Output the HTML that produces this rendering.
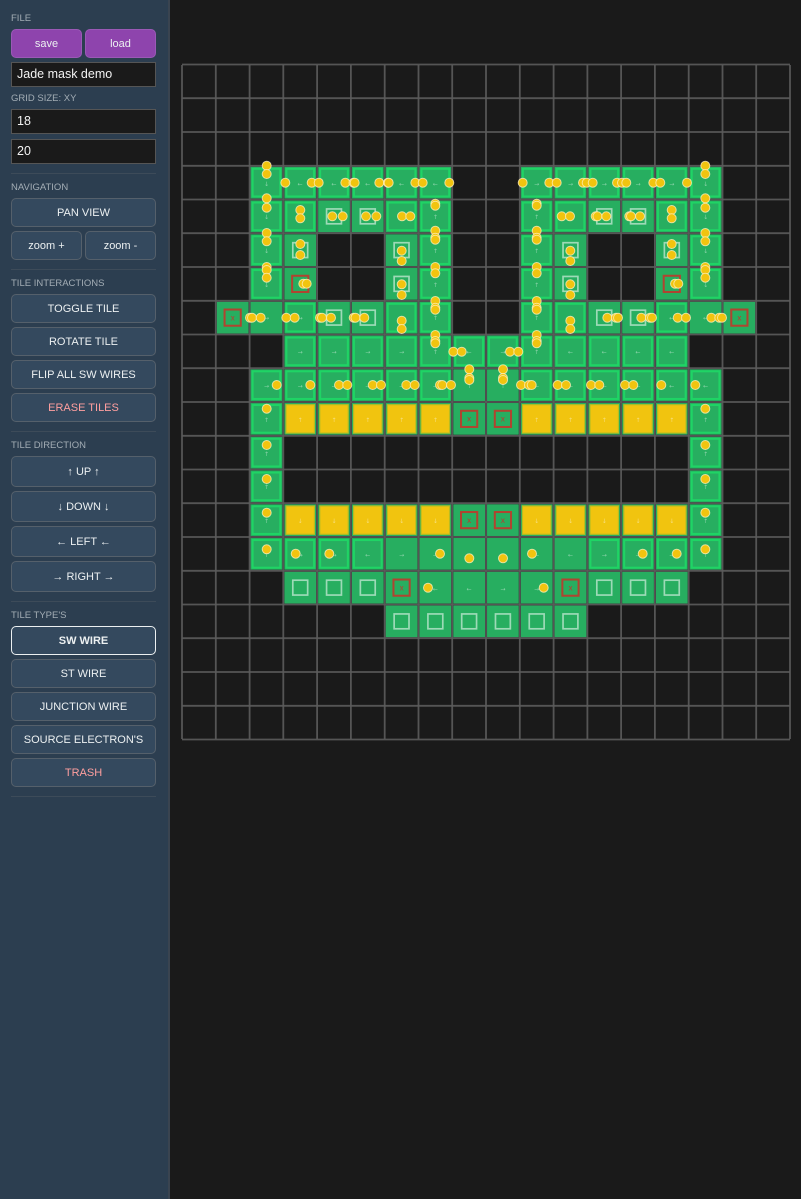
<!DOCTYPE html>
<html><head><meta charset="utf-8"><style>
html,body{margin:0;padding:0;width:801px;height:1199px;overflow:hidden;background:#1a1a1a;font-family:"Liberation Sans",sans-serif}
#side{position:absolute;left:0;top:0;width:168px;height:1199px;background:#2c3e50;border-right:2px solid #3a4450}
#side div{position:absolute;box-sizing:border-box}
.l{left:11px;font-size:9.5px;color:#a3adb5;line-height:12px;white-space:nowrap}
.b{left:11px;width:145px;background:#34495e;border:1px solid #55606b;border-radius:5px;color:#ecf0f1;font-size:11px;text-align:center;white-space:nowrap}
.h{left:11px;width:145px;height:1px;background:#3d4b59}
.i{left:11px;width:145px;height:25px;line-height:23px;background:#1a1a1a;border:1px solid #555;color:#f2f2f2;font-size:12.5px;padding-left:5px}
.p{background:#8e44ad;border-color:#9b59b6}
.e{color:#ff9f9f}
svg{position:absolute;left:0;top:0}
</style></head><body>
<div id="side">
<div class="l" style="top:13px">FILE</div>
<div class="b p" style="top:29px;height:29px;line-height:28px;width:71px">save</div>
<div class="b p" style="top:29px;height:29px;line-height:28px;width:71px;left:85px">load</div>
<div class="i" style="top:62px">Jade mask demo</div>
<div class="l" style="top:93px">GRID SIZE: XY</div>
<div class="i" style="top:109px">18</div>
<div class="i" style="top:139px">20</div>
<div class="h" style="top:173px"></div>
<div class="l" style="top:182px">NAVIGATION</div>
<div class="b" style="top:198px;height:29px;line-height:28px">PAN VIEW</div>
<div class="b" style="top:231px;height:29px;line-height:28px;width:71px">zoom +</div>
<div class="b" style="top:231px;height:29px;line-height:28px;width:71px;left:85px">zoom -</div>
<div class="h" style="top:269px"></div>
<div class="l" style="top:278px">TILE INTERACTIONS</div>
<div class="b" style="top:294px;height:29px;line-height:28px">TOGGLE TILE</div>
<div class="b" style="top:327px;height:29px;line-height:28px">ROTATE TILE</div>
<div class="b" style="top:360px;height:29px;line-height:28px">FLIP ALL SW WIRES</div>
<div class="b e" style="top:393px;height:29px;line-height:28px">ERASE TILES</div>
<div class="h" style="top:431px"></div>
<div class="l" style="top:440px">TILE DIRECTION</div>
<div class="b" style="top:456px;height:31px;line-height:30px">↑ UP ↑</div>
<div class="b" style="top:491px;height:31px;line-height:30px">↓ DOWN ↓</div>
<div class="b" style="top:526px;height:31px;line-height:30px">← LEFT ←</div>
<div class="b" style="top:561px;height:31px;line-height:30px">→ RIGHT →</div>
<div class="h" style="top:601px"></div>
<div class="l" style="top:610px">TILE TYPE'S</div>
<div class="b" style="top:626px;height:29px;line-height:28px;border-color:#ecf0f1;font-weight:bold">SW WIRE</div>
<div class="b" style="top:659px;height:29px;line-height:28px">ST WIRE</div>
<div class="b" style="top:692px;height:29px;line-height:28px">JUNCTION WIRE</div>
<div class="b" style="top:725px;height:29px;line-height:28px">SOURCE ELECTRON'S</div>
<div class="b e" style="top:758px;height:29px;line-height:28px">TRASH</div>
<div class="h" style="top:796px"></div>
</div>
<svg width="801" height="1199" viewBox="0 0 801 1199">
<defs>
<g id="tp"><rect x=".03" y=".03" width=".94" height=".94" fill="#27ae60"/></g>
<g id="tb"><rect x=".03" y=".03" width=".94" height=".94" fill="#27ae60"/><rect x=".09" y=".09" width=".82" height=".82" fill="none" stroke="#1fd465" stroke-width=".06"/></g>
<g id="ty"><rect x=".03" y=".03" width=".94" height=".94" fill="#27ae60"/><rect x=".08" y=".08" width=".84" height=".84" fill="#f1c40f" stroke="#b8bd22" stroke-width=".035"/></g>
<g id="ts"><rect x=".03" y=".03" width=".94" height=".94" fill="#27ae60"/><rect x=".28" y=".28" width=".44" height=".44" fill="none" stroke="#fff" stroke-opacity=".55" stroke-width=".05"/></g>
<g id="tr"><rect x=".03" y=".03" width=".94" height=".94" fill="#27ae60"/><rect x=".26" y=".26" width=".48" height=".48" fill="none" stroke="#c0392b" stroke-opacity=".9" stroke-width=".06"/></g>
</defs>
<g transform="translate(182 64.5) scale(33.78 33.75)">
<use href="#tb" x="2" y="3"/><use href="#tb" x="3" y="3"/><use href="#tb" x="4" y="3"/><use href="#tb" x="5" y="3"/><use href="#tb" x="6" y="3"/><use href="#tb" x="7" y="3"/><use href="#tb" x="10" y="3"/><use href="#tb" x="11" y="3"/><use href="#tb" x="12" y="3"/><use href="#tb" x="13" y="3"/><use href="#tb" x="14" y="3"/><use href="#tb" x="15" y="3"/>
<use href="#tb" x="2" y="4"/><use href="#tb" x="3" y="4"/><use href="#ts" x="4" y="4"/><use href="#ts" x="5" y="4"/><use href="#tb" x="6" y="4"/><use href="#tb" x="7" y="4"/><use href="#tb" x="10" y="4"/><use href="#tb" x="11" y="4"/><use href="#ts" x="12" y="4"/><use href="#ts" x="13" y="4"/><use href="#tb" x="14" y="4"/><use href="#tb" x="15" y="4"/>
<use href="#tb" x="2" y="5"/><use href="#ts" x="3" y="5"/><use href="#ts" x="6" y="5"/><use href="#tb" x="7" y="5"/><use href="#tb" x="10" y="5"/><use href="#ts" x="11" y="5"/><use href="#ts" x="14" y="5"/><use href="#tb" x="15" y="5"/>
<use href="#tb" x="2" y="6"/><use href="#tr" x="3" y="6"/><use href="#ts" x="6" y="6"/><use href="#tb" x="7" y="6"/><use href="#tb" x="10" y="6"/><use href="#ts" x="11" y="6"/><use href="#tr" x="14" y="6"/><use href="#tb" x="15" y="6"/>
<use href="#tr" x="1" y="7"/><use href="#tp" x="2" y="7"/><use href="#tb" x="3" y="7"/><use href="#ts" x="4" y="7"/><use href="#ts" x="5" y="7"/><use href="#tb" x="6" y="7"/><use href="#tb" x="7" y="7"/><use href="#tb" x="10" y="7"/><use href="#tb" x="11" y="7"/><use href="#ts" x="12" y="7"/><use href="#ts" x="13" y="7"/><use href="#tb" x="14" y="7"/><use href="#tp" x="15" y="7"/><use href="#tr" x="16" y="7"/>
<use href="#tb" x="3" y="8"/><use href="#tb" x="4" y="8"/><use href="#tb" x="5" y="8"/><use href="#tb" x="6" y="8"/><use href="#tb" x="7" y="8"/><use href="#tb" x="8" y="8"/><use href="#tb" x="9" y="8"/><use href="#tb" x="10" y="8"/><use href="#tb" x="11" y="8"/><use href="#tb" x="12" y="8"/><use href="#tb" x="13" y="8"/><use href="#tb" x="14" y="8"/>
<use href="#tb" x="2" y="9"/><use href="#tb" x="3" y="9"/><use href="#tb" x="4" y="9"/><use href="#tb" x="5" y="9"/><use href="#tb" x="6" y="9"/><use href="#tb" x="7" y="9"/><use href="#tp" x="8" y="9"/><use href="#tp" x="9" y="9"/><use href="#tb" x="10" y="9"/><use href="#tb" x="11" y="9"/><use href="#tb" x="12" y="9"/><use href="#tb" x="13" y="9"/><use href="#tb" x="14" y="9"/><use href="#tb" x="15" y="9"/>
<use href="#tb" x="2" y="10"/><use href="#ty" x="3" y="10"/><use href="#ty" x="4" y="10"/><use href="#ty" x="5" y="10"/><use href="#ty" x="6" y="10"/><use href="#ty" x="7" y="10"/><use href="#tr" x="8" y="10"/><use href="#tr" x="9" y="10"/><use href="#ty" x="10" y="10"/><use href="#ty" x="11" y="10"/><use href="#ty" x="12" y="10"/><use href="#ty" x="13" y="10"/><use href="#ty" x="14" y="10"/><use href="#tb" x="15" y="10"/>
<use href="#tb" x="2" y="11"/><use href="#tb" x="15" y="11"/><use href="#tb" x="2" y="12"/><use href="#tb" x="15" y="12"/>
<use href="#tb" x="2" y="13"/><use href="#ty" x="3" y="13"/><use href="#ty" x="4" y="13"/><use href="#ty" x="5" y="13"/><use href="#ty" x="6" y="13"/><use href="#ty" x="7" y="13"/><use href="#tr" x="8" y="13"/><use href="#tr" x="9" y="13"/><use href="#ty" x="10" y="13"/><use href="#ty" x="11" y="13"/><use href="#ty" x="12" y="13"/><use href="#ty" x="13" y="13"/><use href="#ty" x="14" y="13"/><use href="#tb" x="15" y="13"/>
<use href="#tb" x="2" y="14"/><use href="#tb" x="3" y="14"/><use href="#tb" x="4" y="14"/><use href="#tb" x="5" y="14"/><use href="#tp" x="6" y="14"/><use href="#tp" x="7" y="14"/><use href="#tp" x="8" y="14"/><use href="#tp" x="9" y="14"/><use href="#tp" x="10" y="14"/><use href="#tp" x="11" y="14"/><use href="#tb" x="12" y="14"/><use href="#tb" x="13" y="14"/><use href="#tb" x="14" y="14"/><use href="#tb" x="15" y="14"/>
<use href="#ts" x="3" y="15"/><use href="#ts" x="4" y="15"/><use href="#ts" x="5" y="15"/><use href="#tr" x="6" y="15"/><use href="#tp" x="7" y="15"/><use href="#tp" x="8" y="15"/><use href="#tp" x="9" y="15"/><use href="#tp" x="10" y="15"/><use href="#tr" x="11" y="15"/><use href="#ts" x="12" y="15"/><use href="#ts" x="13" y="15"/><use href="#ts" x="14" y="15"/>
<use href="#ts" x="6" y="16"/><use href="#ts" x="7" y="16"/><use href="#ts" x="8" y="16"/><use href="#ts" x="9" y="16"/><use href="#ts" x="10" y="16"/><use href="#ts" x="11" y="16"/>
</g>
<g stroke="#5c5c5c" stroke-opacity=".9" stroke-width="1.8" fill="none">
<path d="M182 65V739M215.8 65V739M249.6 65V739M283.3 65V739M317.1 65V739M350.9 65V739M384.7 65V739M418.5 65V739M452.2 65V739M486 65V739M519.8 65V739M553.6 65V739M587.4 65V739M621.1 65V739M654.9 65V739M688.7 65V739M722.5 65V739M756.2 65V739M790 65V739"/>
<path d="M182 64.5H790M182 98.2H790M182 132H790M182 165.8H790M182 199.5H790M182 233.2H790M182 267H790M182 300.8H790M182 334.5H790M182 368.2H790M182 402H790M182 435.8H790M182 469.5H790M182 503.2H790M182 537H790M182 570.8H790M182 604.5H790M182 638.2H790M182 672H790M182 705.8H790M182 739.5H790"/>
</g>
<g font-family="'DejaVu Sans',sans-serif" font-size="6" fill="#fff" fill-opacity=".45" text-anchor="middle">
<text x="266.5 300.2 334 367.8 401.6 435.4 536.7 570.5 604.3 638 671.8 705.6" y="186">↓←←←←←→→→→→↓</text>
<text x="266.5 435.4 536.7 705.6" y="219">↓↑↑↓</text>
<text x="266.5 435.4 536.7 705.6" y="253">↓↑↑↓</text>
<text x="266.5 435.4 536.7 705.6" y="287">↓↑↑↓</text>
<text x="266.5 300.2 435.4 536.7 671.8 705.6" y="320">→→↑↑←←</text>
<text x="300.2 334 367.8 401.6 435.4 469.1 502.9 536.7 570.5 604.3 638 671.8" y="354">→→→→↑←→↑←←←←</text>
<text x="266.5 300.2 334 367.8 401.6 435.4 469.1 502.9 536.7 570.5 604.3 638 671.8 705.6" y="388">→→→→→→↑↑←←←←←←</text>
<text x="266.5 300.2 334 367.8 401.6 435.4 536.7 570.5 604.3 638 671.8 705.6" y="422">↑↑↑↑↑↑↑↑↑↑↑↑</text>
<text x="266.5 705.6" y="456">↑↑</text>
<text x="266.5 705.6" y="489">↑↑</text>
<text x="266.5 300.2 334 367.8 401.6 435.4 536.7 570.5 604.3 638 671.8 705.6" y="523">↑↓↓↓↓↓↓↓↓↓↓↑</text>
<text x="266.5 300.2 334 367.8 401.6 435.4 469.1 502.9 536.7 570.5 604.3 638 671.8 705.6" y="557">↑→→←→→→→←←→→→↑</text>
<text x="435.4 469.1 502.9 536.7" y="591">←←→→</text>
</g>
<text font-family="'Liberation Sans',sans-serif" font-size="8" fill="#c0392b" text-anchor="middle" x="232.7 739.4 469.1 502.9 469.1 502.9 401.6 570.5" y="320.5 320.5 421.5 421.5 522.8 522.8 590.5 590.5">xxxxxxxx</text>
<g fill="#f1c40f" stroke="#fff0c0" stroke-opacity=".75" stroke-width="1">
<circle cx="266.7" cy="165.7" r="4.5"/><circle cx="266.7" cy="174" r="4.5"/><circle cx="285.3" cy="182.7" r="4.5"/><circle cx="311.7" cy="182.7" r="4.5"/><circle cx="318.7" cy="182.7" r="4.5"/><circle cx="345.3" cy="182.7" r="4.5"/><circle cx="353.5" cy="182.7" r="4.5"/><circle cx="354.7" cy="182.7" r="4.5"/><circle cx="379.3" cy="182.7" r="4.5"/><circle cx="388" cy="182.7" r="4.5"/><circle cx="388.7" cy="182.7" r="4.5"/><circle cx="415.3" cy="182.7" r="4.5"/><circle cx="422.7" cy="182.7" r="4.5"/><circle cx="449.3" cy="182.7" r="4.5"/>
<circle cx="266.7" cy="198.3" r="4.5"/><circle cx="266.7" cy="207.7" r="4.5"/><circle cx="266.7" cy="233" r="4.5"/><circle cx="266.7" cy="241.3" r="4.5"/><circle cx="266.7" cy="267" r="4.5"/><circle cx="266.7" cy="270" r="4.5"/><circle cx="266.7" cy="277.7" r="4.5"/>
<circle cx="300.3" cy="210" r="4.5"/><circle cx="300.3" cy="218.3" r="4.5"/><circle cx="332.3" cy="216.3" r="4.5"/><circle cx="342.7" cy="216.3" r="4.5"/><circle cx="366" cy="216.3" r="4.5"/><circle cx="376.3" cy="216.3" r="4.5"/><circle cx="402" cy="216.3" r="4.5"/><circle cx="410.3" cy="216.3" r="4.5"/>
<circle cx="435.3" cy="203.7" r="4.5"/><circle cx="435.3" cy="205.7" r="4.5"/><circle cx="435.3" cy="230.7" r="4.5"/><circle cx="435.3" cy="237.7" r="4.5"/><circle cx="435.3" cy="239.7" r="4.5"/><circle cx="435.3" cy="267" r="4.5"/><circle cx="435.3" cy="273.3" r="4.5"/><circle cx="435.3" cy="301" r="4.5"/><circle cx="435.3" cy="307.7" r="4.5"/><circle cx="435.3" cy="309.7" r="4.5"/><circle cx="435.3" cy="335" r="4.5"/><circle cx="435.3" cy="341" r="4.5"/><circle cx="435.3" cy="343.3" r="4.5"/>
<circle cx="300.3" cy="244" r="4.5"/><circle cx="300.3" cy="255" r="4.5"/><circle cx="303.3" cy="283.7" r="4.5"/><circle cx="306.7" cy="283.7" r="4.5"/><circle cx="401.7" cy="250.7" r="4.5"/><circle cx="401.7" cy="261" r="4.5"/><circle cx="401.7" cy="284.3" r="4.5"/><circle cx="401.7" cy="295" r="4.5"/>
<circle cx="250" cy="317.7" r="4.5"/><circle cx="252" cy="317.7" r="4.5"/><circle cx="260.7" cy="317.7" r="4.5"/><circle cx="286.3" cy="317.7" r="4.5"/><circle cx="294.7" cy="317.7" r="4.5"/><circle cx="320" cy="317.7" r="4.5"/><circle cx="322" cy="317.7" r="4.5"/><circle cx="331" cy="317.7" r="4.5"/><circle cx="353.7" cy="317.7" r="4.5"/><circle cx="355.5" cy="317.7" r="4.5"/><circle cx="364.3" cy="317.7" r="4.5"/><circle cx="401.7" cy="320.7" r="4.5"/><circle cx="401.7" cy="329" r="4.5"/>
<circle cx="453.3" cy="351.7" r="4.5"/><circle cx="461.7" cy="351.7" r="4.5"/><circle cx="510" cy="351.7" r="4.5"/><circle cx="518.3" cy="351.7" r="4.5"/>
<circle cx="276.7" cy="385" r="4.5"/><circle cx="310.3" cy="385" r="4.5"/><circle cx="339" cy="385" r="4.5"/><circle cx="347.3" cy="385" r="4.5"/><circle cx="372.7" cy="385" r="4.5"/><circle cx="381" cy="385" r="4.5"/><circle cx="406.3" cy="385" r="4.5"/><circle cx="414.7" cy="385" r="4.5"/><circle cx="440" cy="385" r="4.5"/><circle cx="442.3" cy="385" r="4.5"/><circle cx="451" cy="385" r="4.5"/>
<circle cx="469.3" cy="369.3" r="4.5"/><circle cx="469.3" cy="378" r="4.5"/><circle cx="469.3" cy="380" r="4.5"/><circle cx="503" cy="369.3" r="4.5"/><circle cx="503" cy="378" r="4.5"/><circle cx="503" cy="380" r="4.5"/>
<circle cx="266.7" cy="408.7" r="4.5"/><circle cx="266.7" cy="445" r="4.5"/><circle cx="266.7" cy="479" r="4.5"/><circle cx="266.7" cy="512.7" r="4.5"/><circle cx="266.7" cy="549.3" r="4.5"/><circle cx="295.7" cy="553.7" r="4.5"/><circle cx="329.3" cy="553.7" r="4.5"/><circle cx="440" cy="553.7" r="4.5"/><circle cx="469.3" cy="558.3" r="4.5"/><circle cx="503" cy="558.3" r="4.5"/><circle cx="428" cy="587.7" r="4.5"/>
<circle cx="522.7" cy="182.7" r="4.5"/><circle cx="549.3" cy="182.7" r="4.5"/><circle cx="556.7" cy="182.7" r="4.5"/><circle cx="583" cy="182.7" r="4.5"/><circle cx="586.7" cy="182.7" r="4.5"/><circle cx="592.7" cy="182.7" r="4.5"/><circle cx="617" cy="182.7" r="4.5"/><circle cx="622" cy="182.7" r="4.5"/><circle cx="626.3" cy="182.7" r="4.5"/><circle cx="653.3" cy="182.7" r="4.5"/><circle cx="660.3" cy="182.7" r="4.5"/><circle cx="687" cy="182.7" r="4.5"/>
<circle cx="705.3" cy="165.7" r="4.5"/><circle cx="705.3" cy="174" r="4.5"/><circle cx="705.3" cy="198.3" r="4.5"/><circle cx="705.3" cy="207.7" r="4.5"/><circle cx="705.3" cy="233" r="4.5"/><circle cx="705.3" cy="241.3" r="4.5"/><circle cx="705.3" cy="267" r="4.5"/><circle cx="705.3" cy="270" r="4.5"/><circle cx="705.3" cy="277.7" r="4.5"/>
<circle cx="536.7" cy="203.7" r="4.5"/><circle cx="536.7" cy="205.7" r="4.5"/><circle cx="536.7" cy="230.7" r="4.5"/><circle cx="536.7" cy="237.7" r="4.5"/><circle cx="536.7" cy="239.7" r="4.5"/><circle cx="536.7" cy="267" r="4.5"/><circle cx="536.7" cy="273.3" r="4.5"/><circle cx="536.7" cy="301" r="4.5"/><circle cx="536.7" cy="307.7" r="4.5"/><circle cx="536.7" cy="309.7" r="4.5"/><circle cx="536.7" cy="335" r="4.5"/><circle cx="536.7" cy="341" r="4.5"/><circle cx="536.7" cy="343.3" r="4.5"/>
<circle cx="561.7" cy="216.3" r="4.5"/><circle cx="570" cy="216.3" r="4.5"/><circle cx="595.7" cy="216.3" r="4.5"/><circle cx="597.5" cy="216.3" r="4.5"/><circle cx="606.3" cy="216.3" r="4.5"/><circle cx="629.3" cy="216.3" r="4.5"/><circle cx="631" cy="216.3" r="4.5"/><circle cx="640" cy="216.3" r="4.5"/><circle cx="671.7" cy="210" r="4.5"/><circle cx="671.7" cy="218.3" r="4.5"/>
<circle cx="570.3" cy="250.7" r="4.5"/><circle cx="570.3" cy="261" r="4.5"/><circle cx="671.7" cy="244" r="4.5"/><circle cx="671.7" cy="255" r="4.5"/><circle cx="570.3" cy="284.3" r="4.5"/><circle cx="570.3" cy="295" r="4.5"/><circle cx="675" cy="283.7" r="4.5"/><circle cx="678.3" cy="283.7" r="4.5"/>
<circle cx="570.3" cy="320.7" r="4.5"/><circle cx="570.3" cy="329" r="4.5"/><circle cx="607.3" cy="317.7" r="4.5"/><circle cx="616" cy="317.7" r="4.5"/><circle cx="618" cy="317.7" r="4.5"/><circle cx="641.3" cy="317.7" r="4.5"/><circle cx="650" cy="317.7" r="4.5"/><circle cx="652" cy="317.7" r="4.5"/><circle cx="677.7" cy="317.7" r="4.5"/><circle cx="686" cy="317.7" r="4.5"/><circle cx="711.3" cy="317.7" r="4.5"/><circle cx="719.3" cy="317.7" r="4.5"/><circle cx="722" cy="317.7" r="4.5"/>
<circle cx="521" cy="385" r="4.5"/><circle cx="529" cy="385" r="4.5"/><circle cx="531.7" cy="385" r="4.5"/><circle cx="557.7" cy="385" r="4.5"/><circle cx="566" cy="385" r="4.5"/><circle cx="591" cy="385" r="4.5"/><circle cx="599.3" cy="385" r="4.5"/><circle cx="625" cy="385" r="4.5"/><circle cx="633.3" cy="385" r="4.5"/><circle cx="661.3" cy="385" r="4.5"/><circle cx="695.3" cy="385" r="4.5"/>
<circle cx="705.3" cy="408.7" r="4.5"/><circle cx="705.3" cy="445" r="4.5"/><circle cx="705.3" cy="479" r="4.5"/><circle cx="705.3" cy="512.7" r="4.5"/><circle cx="705.3" cy="549.3" r="4.5"/><circle cx="532" cy="553.7" r="4.5"/><circle cx="642.7" cy="553.7" r="4.5"/><circle cx="676.7" cy="553.7" r="4.5"/><circle cx="543.7" cy="587.7" r="4.5"/>
</g>
</svg>
</body></html>
